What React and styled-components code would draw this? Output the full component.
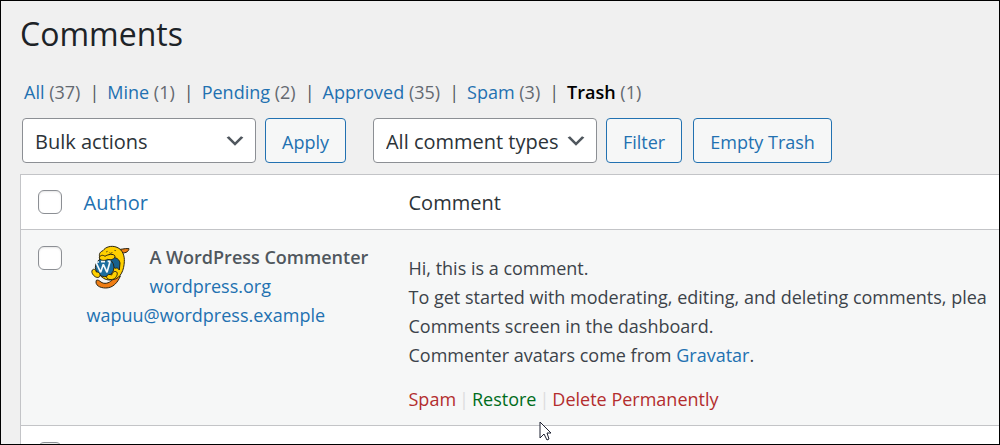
import React from "react";
import styled, { createGlobalStyle } from "styled-components";

const GlobalStyle = createGlobalStyle`
  * {
    box-sizing: border-box;
  }
  body {
    margin: 0;
    background: #f0f0f0;
    color: #3c434a;
    font-family: "Segoe UI", "Open Sans", "Noto Sans", sans-serif;
    font-size: 18px;
    line-height: 29px;
  }
`;

const Page = styled.div`
  position: relative;
  height: 100vh;
  overflow: hidden;
  border: 1px solid #000;
  padding: 12px 0 0 19px;
`;

const Title = styled.h1`
  margin: 0;
  font-size: 32px;
  font-weight: 400;
  line-height: 42px;
  color: #1d2327;
`;

const Views = styled.ul`
  display: flex;
  margin: 23px 0 11px;
  padding: 0 0 0 4px;
  list-style: none;
  white-space: nowrap;
`;

const View = styled.li`
  color: #646970;

  &:not(:last-child)::after {
    content: "|";
    margin: 0 8px 0 9px;
    color: #50575e;
  }
`;

const Link = styled.a`
  color: ${({ $color }) => $color || "#2271b1"};
  text-decoration: none;

  &[aria-current] {
    color: #000;
    font-weight: 600;
  }
`;

const Toolbar = styled.div`
  display: flex;
  gap: 27px;
  padding: 0 2px;
  margin-bottom: 11px;
`;

const Group = styled.div`
  display: flex;
  gap: 9px;
`;

const SelectBox = styled.div`
  position: relative;
  width: ${({ $width }) => $width};
  height: 45px;

  svg {
    position: absolute;
    top: 11px;
    right: 9px;
    width: 24px;
    height: 24px;
    pointer-events: none;
  }
`;

const Select = styled.select`
  appearance: none;
  width: 100%;
  height: 100%;
  padding: 2px 32px 0 12px;
  border: 1px solid #8c8f94;
  border-radius: 4px;
  background: #fff;
  color: #2c3338;
  font-family: inherit;
  font-size: 20px;
`;

const Button = styled.button`
  height: 45px;
  padding: 2px 16px 0;
  border: 1px solid #2271b1;
  border-radius: 4px;
  background: #f6f7f7;
  color: #2271b1;
  font-family: inherit;
  font-size: 18px;
  white-space: nowrap;

  & + & {
    margin-left: 2px;
  }
`;

const Table = styled.table`
  width: 100%;
  table-layout: fixed;
  border-collapse: collapse;
  border: 1px solid #c3c4c7;
  border-right: 0;
  background: #fff;
`;

const Row = styled.tr`
  border-bottom: 1px solid #c3c4c7;
  background: ${({ $shaded }) => ($shaded ? "#f6f7f7" : "#fff")};
`;

const HeadCell = styled.th`
  width: ${({ $width }) => $width || "auto"};
  height: 55px;
  padding: 0 0 0 ${({ $indent }) => $indent || "12px"};
  text-align: left;
  font-size: 20px;
  font-weight: 400;
  color: #2c3338;
`;

const CheckCell = styled.td`
  padding: 16px 0 0 17px;
  vertical-align: top;
`;

const Checkbox = styled.input`
  appearance: none;
  display: block;
  width: 24px;
  height: 24px;
  margin: 0;
  border: 1px solid #8c8f94;
  border-radius: 6px;
  background: #fff;
  box-shadow: inset 0 1px 2px rgba(0, 0, 0, 0.1);
`;

const AuthorCell = styled.td`
  padding: 13px 12px 0 8px;
  vertical-align: top;
  white-space: nowrap;
`;

const AuthorTop = styled.div`
  display: flex;
  gap: 15px;

  svg {
    flex: none;
    width: 48px;
    height: 48px;
  }
`;

const Name = styled.strong`
  display: block;
  font-weight: 600;
  color: #50575e;
`;

const CommentCell = styled.td`
  padding: 24px 0 11px 12px;
  vertical-align: top;
  white-space: nowrap;
`;

const Text = styled.p`
  margin: 0 0 15px;
`;

const Actions = styled.div`
  display: flex;
  color: #dcdcde;

  span {
    margin: 0 3px;
  }
`;

const Pointer = styled.svg`
  position: absolute;
  left: 538px;
  top: 420px;
  width: 13px;
  height: 20px;
`;

const Chevron = () => (
  <svg viewBox="0 0 20 20" aria-hidden="true">
    <path d="M5 6l5 5 5-5 2 1-7 7-7-7 2-1z" fill="#50575e" />
  </svg>
);

const Wapuu = () => (
  <svg viewBox="20 24 144 144" aria-hidden="true">
    <g stroke="#2a2413" strokeWidth="3" strokeLinejoin="round">
      <path
        d="M48 136c9-4 12 9 26 9 13 0 22-9 28-18l18-4c-8 20-22 36-44 36-18 0-33-9-28-23z"
        fill="#ef7d14"
      />
      <path d="M110 43c12 2 22-4 36-2-1 8-8 13-21 13z" fill="#ef7d14" />
      <path
        d="M58 66c-3-10 2-16 10-19 7-11 25-17 42-10 17 7 23 25 22 43-1 24-10 50-34 54-18 4-32-4-39-14z"
        fill="#ffd000"
      />
      <path d="M88 72c12-8 28-4 31 12l-2 21c-4-6-8-7-11-5-3-3-8-2-12 3z" fill="#17618e" />
      <circle cx="73" cy="97" r="28" fill="#1b6d9e" />
      <path d="M57 68c2-8 11-9 17-4 8-6 26-9 30-1 1 9-12 13-22 10-8 5-23 5-25-5z" fill="#ffd000" />
      <path
        d="M36 105c5-5 10-1 12 6 8-1 14 7 10 14-6 5-15 1-19-5-4-4-6-11-3-15z"
        fill="#ffd000"
      />
      <path
        d="M79 124c2-6 9-7 15-4 2-7 8-14 15-9 5 6-1 17-9 21-9 4-23 1-21-8z"
        fill="#ffd000"
      />
    </g>
    <path
      d="M47 82l14 30 8-24 11 24 9-32M44 81h12M62 80h12M82 79h9"
      fill="none"
      stroke="#f4f8fa"
      strokeWidth="5"
      strokeLinejoin="bevel"
    />
    <path
      d="M77 51l5-2M102 46l5 1M87 53c3 4 8 2 9-2"
      fill="none"
      stroke="#2a2413"
      strokeWidth="2"
    />
  </svg>
);

const views = [
  { name: "All", count: 37 },
  { name: "Mine", count: 1 },
  { name: "Pending", count: 2 },
  { name: "Approved", count: 35 },
  { name: "Spam", count: 3 },
  { name: "Trash", count: 1, current: true },
];

const App = () => {
  return (
    <Page>
      <GlobalStyle />
      <Title>Comments</Title>

      <Views>
        {views.map((view) => (
          <View key={view.name}>
            <Link href="#" aria-current={view.current ? "page" : undefined}>
              {view.name}
            </Link>{" "}
            ({view.count})
          </View>
        ))}
      </Views>

      <Toolbar>
        <Group>
          <SelectBox $width="234px">
            <Select aria-label="Select bulk action">
              <option>Bulk actions</option>
            </Select>
            <Chevron />
          </SelectBox>
          <Button type="button">Apply</Button>
        </Group>
        <Group>
          <SelectBox $width="224px">
            <Select aria-label="Filter by comment type">
              <option>All comment types</option>
            </Select>
            <Chevron />
          </SelectBox>
          <Button type="button">Filter</Button>
          <Button type="button">Empty Trash</Button>
        </Group>
      </Toolbar>

      <Table>
        <thead>
          <Row>
            <HeadCell $width="58px" $indent="17px">
              <Checkbox type="checkbox" aria-label="Select all" />
            </HeadCell>
            <HeadCell $width="318px" $indent="5px">
              <Link href="#">Author</Link>
            </HeadCell>
            <HeadCell>Comment</HeadCell>
          </Row>
        </thead>
        <tbody>
          <Row $shaded>
            <CheckCell>
              <Checkbox type="checkbox" aria-label="Select comment" />
            </CheckCell>
            <AuthorCell>
              <AuthorTop>
                <Wapuu />
                <div>
                  <Name>A WordPress Commenter</Name>
                  <Link href="#">wordpress.org</Link>
                </div>
              </AuthorTop>
              <Link href="#">wapuu@wordpress.example</Link>
            </AuthorCell>
            <CommentCell>
              <Text>
                Hi, this is a comment.
                <br />
                To get started with moderating, editing, and deleting comments, plea
                <br />
                Comments screen in the dashboard.
                <br />
                Commenter avatars come from <Link href="#">Gravatar</Link>.
              </Text>
              <Actions>
                <Link href="#" $color="#b32d2e">Spam</Link>
                <span>|</span>
                <Link href="#" $color="#006d1b">Restore</Link>
                <span>|</span>
                <Link href="#" $color="#b32d2e">Delete Permanently</Link>
              </Actions>
            </CommentCell>
          </Row>
          <Row>
            <CheckCell>
              <Checkbox type="checkbox" aria-label="Select comment" />
            </CheckCell>
            <AuthorCell />
            <CommentCell />
          </Row>
        </tbody>
      </Table>

      <Pointer viewBox="0 0 13 20" aria-hidden="true">
        <path
          d="M1 1v16l4-4 3 6 2-1-2-6h4z"
          fill="#fff"
          stroke="#1d2030"
          strokeWidth="1"
          strokeLinejoin="round"
        />
      </Pointer>
    </Page>
  );
};

export default App;
